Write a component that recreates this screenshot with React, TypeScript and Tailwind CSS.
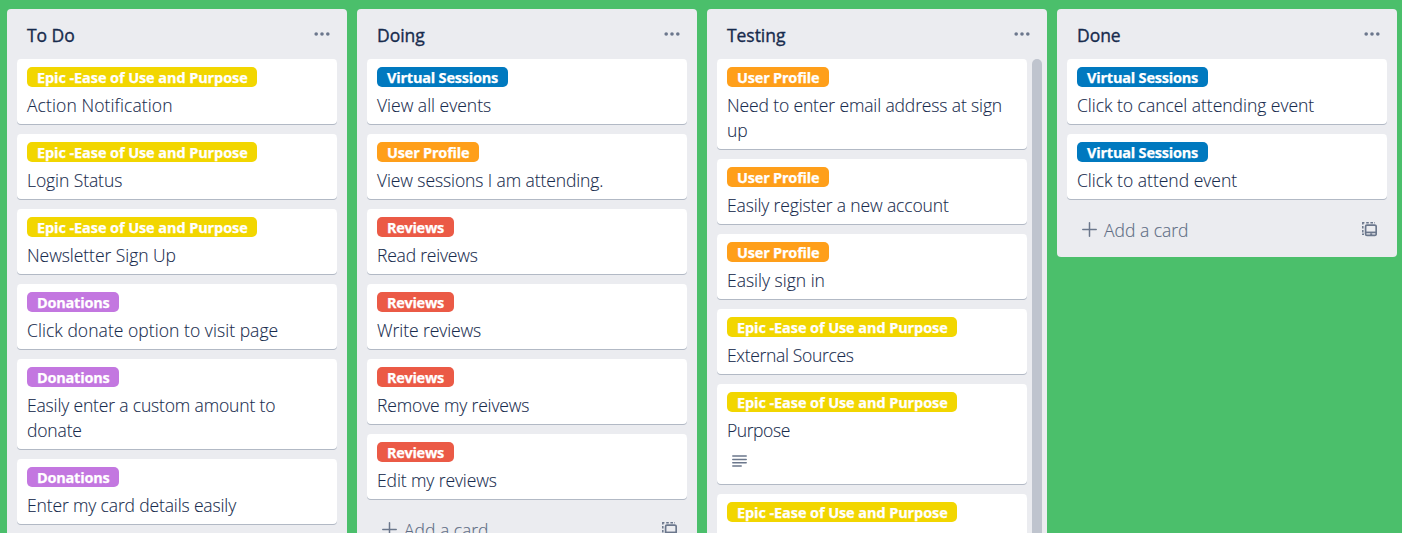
type Tag = { text: string; className: string };

const epic: Tag = { text: "Epic -Ease of Use and Purpose", className: "w-[230px] bg-[#f2d600] tracking-[-0.09px]" };
const donations: Tag = { text: "Donations", className: "w-[92px] bg-[#c377e0] tracking-[-0.22px]" };
const virtual: Tag = { text: "Virtual Sessions", className: "w-[131px] bg-[#0079bf] tracking-[-0.2px]" };
const profile: Tag = { text: "User Profile", className: "w-[102px] bg-[#ff9f1a] tracking-[-0.2px]" };
const reviews: Tag = { text: "Reviews", className: "w-[77px] bg-[#eb5a46] tracking-[-0.3px]" };

type CardData = { tag: Tag; title: string; spacing?: string; description?: boolean };
type ListData = { name: string; cards: CardData[]; scroll?: boolean };

const lists: ListData[] = [
  {
    name: "To Do",
    cards: [
      { tag: epic, title: "Action Notification", spacing: "tracking-[0.1px]" },
      { tag: epic, title: "Login Status", spacing: "tracking-[-0.08px]" },
      { tag: epic, title: "Newsletter Sign Up", spacing: "tracking-[-0.05px]" },
      { tag: donations, title: "Click donate option to visit page", spacing: "tracking-[0.05px]" },
      { tag: donations, title: "Easily enter a custom amount to donate", spacing: "tracking-[-0.16px]" },
      { tag: donations, title: "Enter my card details easily", spacing: "tracking-[-0.14px]" },
    ],
  },
  {
    name: "Doing",
    cards: [
      { tag: virtual, title: "View all events" },
      { tag: profile, title: "View sessions I am attending.", spacing: "tracking-[-0.1px]" },
      { tag: reviews, title: "Read reivews", spacing: "tracking-[-0.2px]" },
      { tag: reviews, title: "Write reviews", spacing: "tracking-[-0.08px]" },
      { tag: reviews, title: "Remove my reivews", spacing: "tracking-[-0.15px]" },
      { tag: reviews, title: "Edit my reviews", spacing: "tracking-[-0.1px]" },
    ],
  },
  {
    name: "Testing",
    scroll: true,
    cards: [
      { tag: profile, title: "Need to enter email address at sign up", spacing: "tracking-[-0.13px]" },
      { tag: profile, title: "Easily register a new account", spacing: "tracking-[-0.14px]" },
      { tag: profile, title: "Easily sign in" },
      { tag: epic, title: "External Sources", spacing: "tracking-[-0.32px]" },
      { tag: epic, title: "Purpose", description: true, spacing: "tracking-[-0.42px]" },
      { tag: epic, title: "" },
    ],
  },
  {
    name: "Done",
    cards: [
      { tag: virtual, title: "Click to cancel attending event", spacing: "tracking-[-0.02px]" },
      { tag: virtual, title: "Click to attend event" },
    ],
  },
];

function DotsIcon() {
  return (
    <svg width="16" height="4" viewBox="0 0 16 4" fill="#6b778c">
      <circle cx="2.2" cy="2" r="1.8" />
      <circle cx="8" cy="2" r="1.8" />
      <circle cx="13.8" cy="2" r="1.8" />
    </svg>
  );
}

function PlusIcon() {
  return (
    <svg width="15" height="15" viewBox="0 0 15 15" stroke="#6b778c" strokeWidth="1.5" strokeLinecap="round">
      <path d="M7.5 0.8V14.2M0.8 7.5H14.2" />
    </svg>
  );
}

function TemplateIcon() {
  return (
    <svg width="15" height="15" viewBox="0 0 15 15" fill="none" stroke="#6b778c">
      <path
        d="M0.8 2.4V0.8H2.4M4.2 0.8H6.8M8.4 0.8H11M12.2 0.8H12.8M0.8 4V6.4M0.8 8V10.4M0.8 11.6V12.2H2"
        strokeWidth="1.5"
      />
      <rect x="3.6" y="3.2" width="10.6" height="10.2" rx="1.4" strokeWidth="1.7" />
      <path d="M3.6 10.4H14" strokeWidth="1.7" />
      <path d="M8.2 12.2H10.2" strokeWidth="1.8" />
    </svg>
  );
}

function DescriptionIcon() {
  return (
    <svg width="15" height="12" viewBox="0 0 15 12" stroke="#6b778c" strokeWidth="1.5" strokeLinecap="round">
      <path d="M0.8 0.9H14.2M0.8 4.4H14.2M0.8 7.8H14.2M0.8 11.1H9.2" />
    </svg>
  );
}

function Card({ card }: { card: CardData }) {
  return (
    <div className="shrink-0 rounded-[4px] bg-white px-[10px] pt-2 pb-[6px] shadow-[0_1px_0_rgba(9,30,66,0.25)]">
      <div
        className={`${card.tag.className} h-5 rounded-[5px] px-[10px] pt-px text-[14.5px] leading-5 font-bold whitespace-nowrap text-white [-webkit-text-stroke:0.25px_white]`}
      >
        {card.tag.text}
      </div>
      <div
        className={`${card.spacing ?? ""} mt-[6px] min-h-[25px] text-[17.5px] leading-[25px] font-light text-[#172b4d] [-webkit-text-stroke:0.1px_#172b4d]`}
      >
        {card.title}
      </div>
      {card.description && (
        <div className="flex h-[35px] items-start pt-3 pl-[5px]">
          <DescriptionIcon />
        </div>
      )}
    </div>
  );
}

function List({ list }: { list: ListData }) {
  return (
    <section className="flex w-[340px] shrink-0 flex-col rounded-[4px] bg-[#ebecf0] px-[10px]">
      <header className="flex h-[50px] shrink-0 items-start justify-between pr-[7px] pl-[10px]">
        <h2 className="pt-[14px] text-[17.5px] leading-[25px] font-normal tracking-[-0.05px] text-[#172b4d] [-webkit-text-stroke:0.35px_#172b4d]">
          {list.name}
        </h2>
        <div className="pt-[23px]">
          <DotsIcon />
        </div>
      </header>
      <div className="flex gap-[5px]">
        <div className="flex min-w-0 grow flex-col gap-[10px]">
          {list.cards.map((card, i) => (
            <Card key={i} card={card} />
          ))}
        </div>
        {list.scroll && <div className="-mr-[5px] w-[10px] shrink-0 rounded-full bg-[#bfc4ce]" />}
      </div>
      <footer className="flex h-[58px] shrink-0 items-start pt-[18px] pr-[10px] pl-[15px]">
        <div className="pt-[5px]">
          <PlusIcon />
        </div>
        <span className="pt-px pl-[7px] text-[17.5px] leading-[25px] font-light text-[#5e6c84] [-webkit-text-stroke:0.15px_#5e6c84]">
          Add a card
        </span>
        <div className="ml-auto pt-[5px]">
          <TemplateIcon />
        </div>
      </footer>
    </section>
  );
}

export default function App() {
  return (
    <main className="flex h-[533px] w-[1402px] items-start gap-[10px] overflow-hidden bg-[#4bbf6b] pt-[9px] pl-[7px] font-['Open_Sans','Noto_Sans',sans-serif]">
      {lists.map((list) => (
        <List key={list.name} list={list} />
      ))}
    </main>
  );
}
